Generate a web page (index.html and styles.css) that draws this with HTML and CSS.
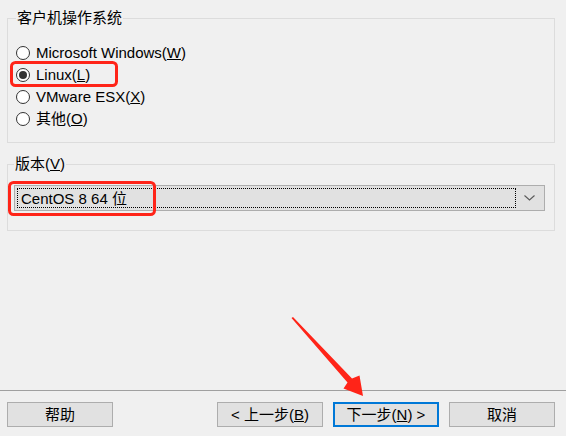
FILE: index.html
```html
<!DOCTYPE html>
<html lang="zh-CN">
<head>
    <meta charset="UTF-8">
    <title>新建虚拟机向导</title>
    <link rel="stylesheet" href="styles.css">
</head>
<body>
    <div class="wizard">
        <div class="wizard-body">
            <fieldset class="group group-os">
                <legend>客户机操作系统</legend>
                <label class="radio-row">
                    <span class="radio"></span>
                    <span>Microsoft Windows(<u>W</u>)</span>
                </label>
                <label class="radio-row">
                    <span class="radio checked"></span>
                    <span>Linux(<u>L</u>)</span>
                </label>
                <label class="radio-row">
                    <span class="radio"></span>
                    <span>VMware ESX(<u>X</u>)</span>
                </label>
                <label class="radio-row">
                    <span class="radio"></span>
                    <span>其他(<u>O</u>)</span>
                </label>
            </fieldset>

            <fieldset class="group group-version">
                <legend>版本(<u>V</u>)</legend>
                <div class="combo">
                    <div class="combo-value">CentOS 8 64 位</div>
                    <svg class="combo-arrow" width="11" height="6" viewBox="0 0 11 6">
                        <path d="M0.5 0.5 L5.5 5 L10.5 0.5" fill="none" stroke="#5a5a5a" stroke-width="1.1"/>
                    </svg>
                </div>
            </fieldset>
        </div>

        <div class="wizard-footer">
            <button class="btn">帮助</button>
            <div class="nav">
                <button class="btn">&lt; 上一步(<u>B</u>)</button>
                <button class="btn btn-default">下一步(<u>N</u>) &gt;</button>
                <button class="btn">取消</button>
            </div>
        </div>

        <!-- 标注：红框和箭头 -->
        <svg class="marks" width="566" height="436" viewBox="0 0 566 436">
            <rect x="11.5" y="62.5" width="105" height="23" rx="4" fill="none" stroke="#ff2418" stroke-width="3"/>
            <rect x="9.5" y="182.5" width="145" height="32" rx="4" fill="none" stroke="#ff2418" stroke-width="3"/>
            <polygon points="291.5,318 293,317 352,378.5 359.5,375.5 363,396 343.5,388.5 347.5,382.5" fill="#ff2418"/>
        </svg>
    </div>
</body>
</html>
```

FILE: styles.css
```css
* {
    margin: 0;
    padding: 0;
    box-sizing: border-box;
}

body {
    font-family: 'Liberation Sans', 'Noto Sans CJK SC', sans-serif;
    font-size: 15px;
    color: #000;
    background: #f0f0f0;
}

.wizard {
    position: relative;
    width: 566px;
    height: 436px;
    display: flex;
    flex-direction: column;
}

.wizard-body {
    flex: 1;
    padding: 9px 11px 0 7px;
}

.group {
    border: 1px solid #dcdcdc;
    padding: 0 0 0 8px;
}

.group legend {
    padding: 0 1px;
    line-height: 18px;
}

.group-os {
    height: 134px;
    padding-top: 15px;
}

.radio-row {
    display: flex;
    align-items: center;
    gap: 6px;
    height: 22px;
    line-height: 22px;
}

.radio {
    flex: none;
    width: 14px;
    height: 14px;
    border: 1px solid #333;
    border-radius: 50%;
    background: #fff;
    display: flex;
    align-items: center;
    justify-content: center;
}

.radio.checked::after {
    content: "";
    width: 8px;
    height: 8px;
    border-radius: 50%;
    background: #333;
}

.group-version {
    margin-top: 12px;
    height: 76px;
    padding: 12px 9px 0 6px;
}

.combo {
    height: 26px;
    border: 1px solid #adadad;
    background: #e1e1e1;
    display: flex;
    align-items: center;
    padding: 2px 6px 2px 2px;
}

.combo-value {
    flex: 1;
    height: 20px;
    line-height: 19px;
    border: 1px dotted #000;
    padding-left: 3px;
    margin-right: 8px;
}

.combo-arrow {
    display: block;
    margin-right: 3px;
}

.wizard-footer {
    border-top: 1px solid #a0a0a0;
    height: 46px;
    padding: 11px 11px 0 7px;
    display: flex;
    justify-content: space-between;
    align-items: flex-start;
}

.nav {
    display: flex;
    gap: 10px;
}

.btn {
    width: 106px;
    height: 25px;
    border: 1px solid #adadad;
    background: #e1e1e1;
    font: inherit;
    color: #000;
    line-height: 22px;
}

.btn-default {
    border: 2px solid #0078d7;
}

.marks {
    position: absolute;
    left: 0;
    top: 0;
    pointer-events: none;
}
```
